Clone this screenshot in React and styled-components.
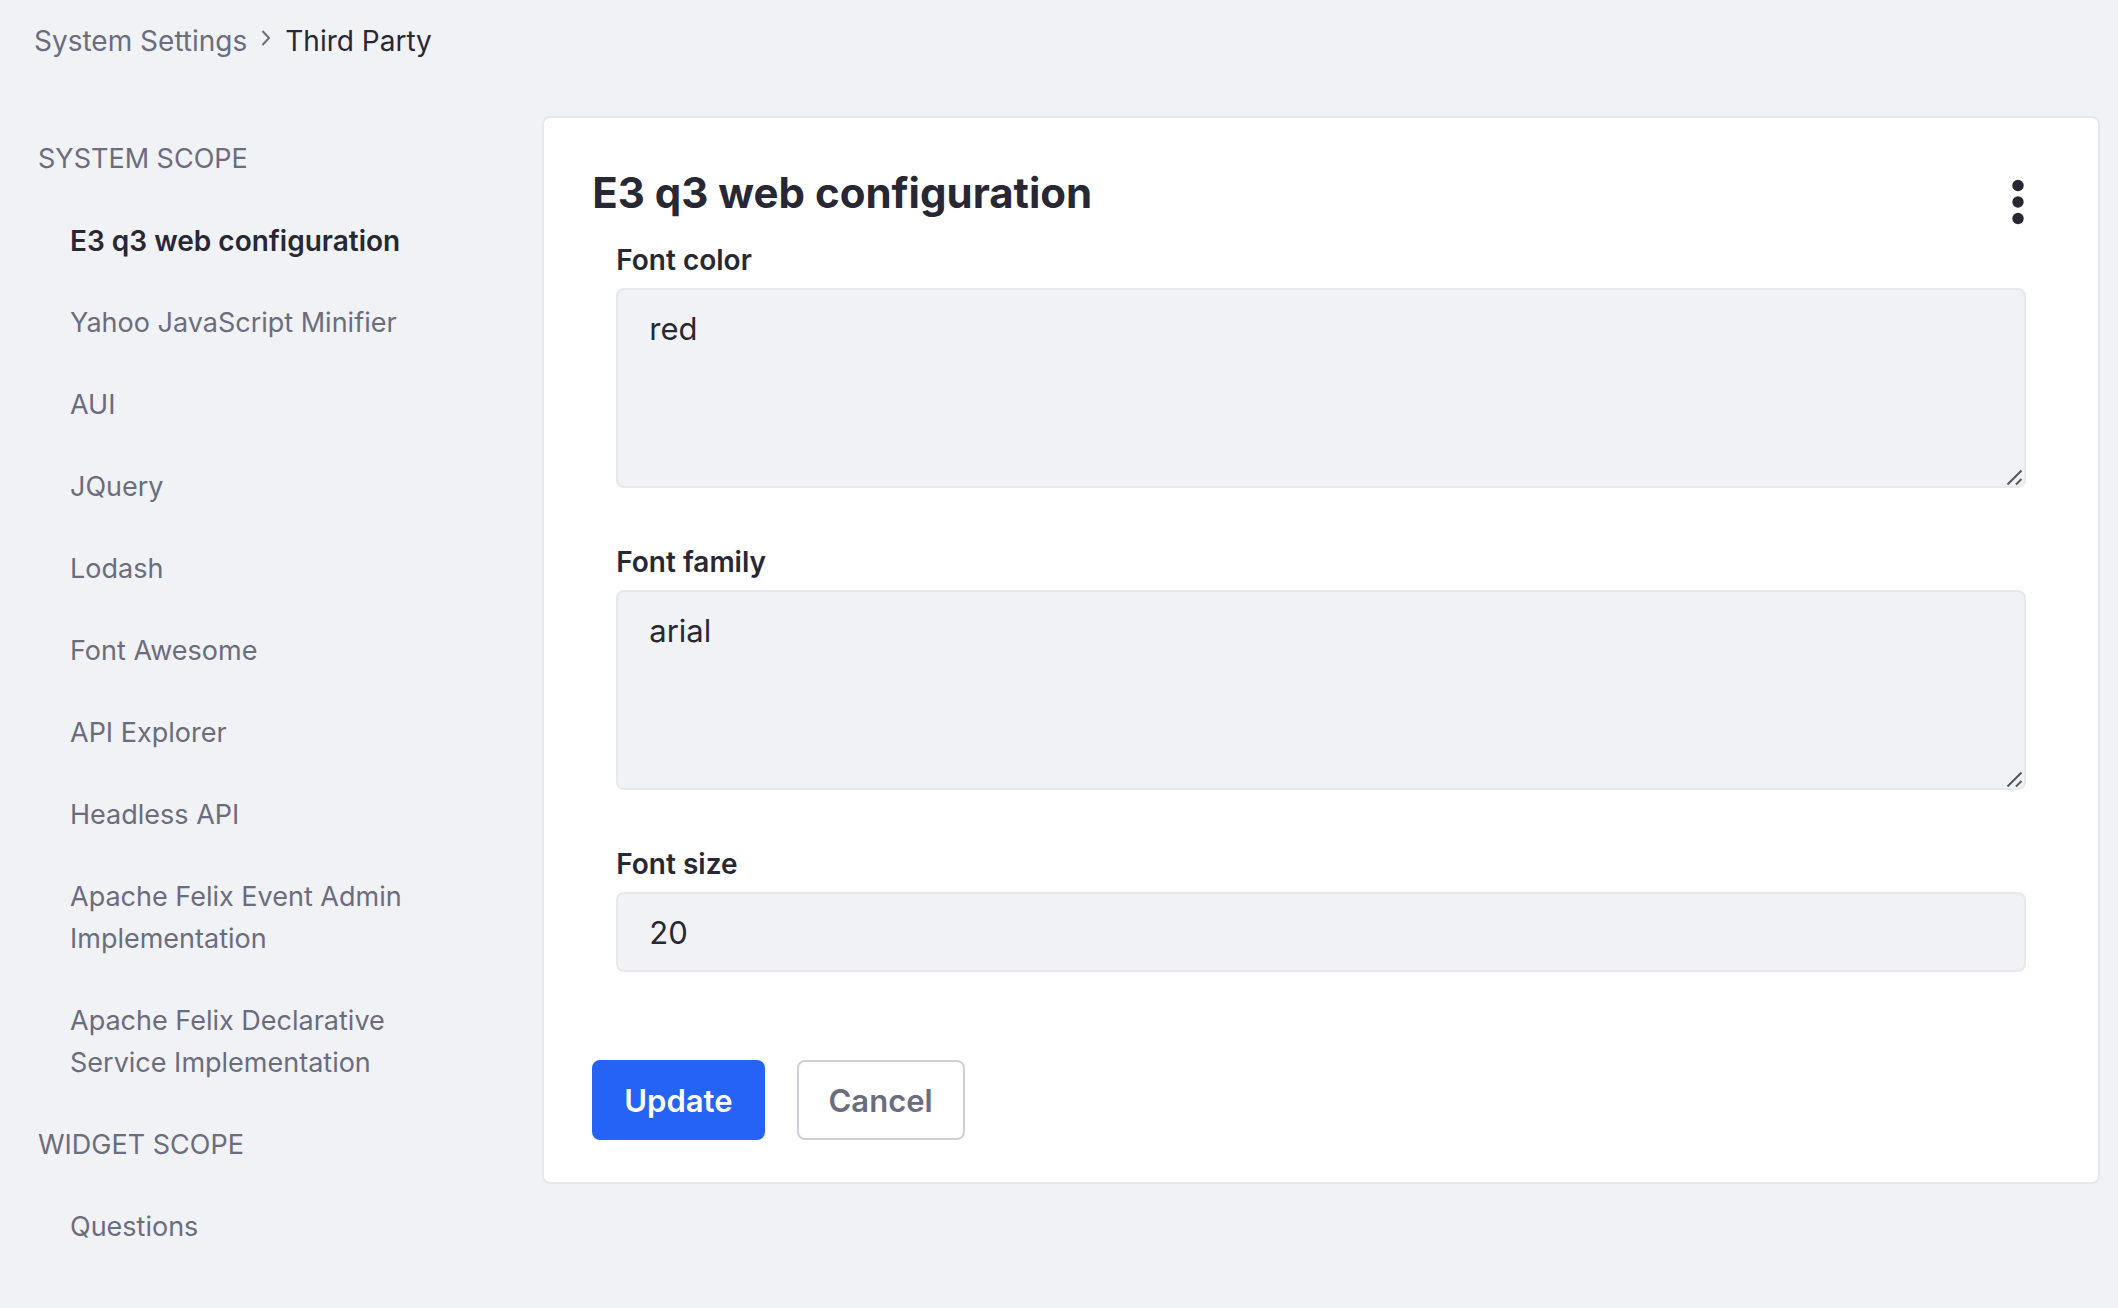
import React from "react";
import styled, { createGlobalStyle, css } from "styled-components";

const color = {
  page: "#f1f2f5",
  surface: "#ffffff",
  border: "#e7e7ed",
  text: "#272833",
  muted: "#6b6c7e",
  primary: "#2563f7",
  buttonBorder: "#cdced9",
};

const GlobalStyle = createGlobalStyle`
  *, *::before, *::after { box-sizing: border-box; }
  body {
    margin: 0;
    background: ${color.page};
    color: ${color.text};
    font-family: Inter, "Liberation Sans", sans-serif;
    font-size: 27px;
    line-height: 42px;
  }
`;

const Breadcrumb = styled.nav`
  padding: 20px 34px 54px;
  font-size: 28px;
`;

const Crumbs = styled.ol`
  display: flex;
  flex-wrap: wrap;
  align-items: center;
  margin: 0;
  padding: 0;
  list-style: none;
`;

const Crumb = styled.li`
  display: flex;
  align-items: center;
`;

const CrumbLink = styled.a`
  color: ${color.muted};
  text-decoration: none;
`;

const Chevron = styled.svg`
  width: 10px;
  height: 16px;
  margin: 0 14px 6px;
  fill: none;
  stroke: ${color.muted};
  stroke-width: 2;
`;

const Layout = styled.div`
  display: grid;
  grid-template-columns: minmax(0, 1fr) minmax(0, 3fr);
  align-items: start;
  gap: 5px;
  padding: 0 18px 40px;
`;

const Sidebar = styled.nav`
  padding: 2px 40px 0 20px;
`;

const ScopeTitle = styled.h2`
  margin: 0;
  padding: 20px 0;
  color: ${color.muted};
  font-size: inherit;
  font-weight: 400;
  text-transform: uppercase;
`;

const ScopeList = styled.ul`
  margin: 0;
  padding: 0 32px;
  list-style: none;
`;

const ScopeLink = styled.a`
  display: block;
  padding: 20px 0;
  color: ${(p) => (p.$active ? color.text : color.muted)};
  font-size: ${(p) => (p.$active ? "28px" : "27px")};
  font-weight: ${(p) => (p.$active ? 600 : 400)};
  text-decoration: none;
`;

const Card = styled.form`
  padding: 52px 48px 42px;
  background: ${color.surface};
  border: 2px solid ${color.border};
  border-radius: 8px;
`;

const CardHeader = styled.header`
  display: flex;
  align-items: flex-start;
  justify-content: space-between;
`;

const Title = styled.h1`
  margin: 0;
  font-size: 42px;
  line-height: 46px;
  font-weight: 700;
`;

const MenuButton = styled.button`
  display: flex;
  align-items: center;
  justify-content: center;
  width: 64px;
  height: 64px;
  padding: 0;
  color: ${color.text};
  background: transparent;
  border: 0;
  border-radius: 8px;
  cursor: pointer;
`;

const Fields = styled.div`
  display: flex;
  flex-direction: column;
  gap: 54px;
  padding: 6px 24px 88px;
`;

const Field = styled.div`
  display: flex;
  flex-direction: column;
  gap: 8px;
`;

const Label = styled.label`
  font-size: 28px;
  line-height: 40px;
  font-weight: 600;
`;

const control = css`
  display: block;
  width: 100%;
  margin: 0;
  padding: 15px 31px 13px;
  color: ${color.text};
  background: ${color.page};
  border: 2px solid ${color.border};
  border-radius: 8px;
  outline: 0;
  font-family: inherit;
  font-size: 31px;
  line-height: 48px;
`;

const TextInput = styled.input`
  ${control}
`;

const AreaWrap = styled.div`
  position: relative;
`;

const TextArea = styled.textarea`
  ${control}
  height: 200px;
  resize: vertical;

  &::-webkit-resizer {
    display: none;
  }
`;

const Grip = styled.svg`
  position: absolute;
  right: 2px;
  bottom: 2px;
  width: 18px;
  height: 18px;
  fill: none;
  stroke: #55565c;
  stroke-width: 2;
  pointer-events: none;
`;

const Actions = styled.div`
  display: flex;
  flex-wrap: wrap;
  gap: 32px;
`;

const Button = styled.button`
  padding: 15px 30px 13px;
  color: ${(p) => (p.$primary ? "#ffffff" : color.muted)};
  background: ${(p) => (p.$primary ? color.primary : color.surface)};
  border: 2px solid ${(p) => (p.$primary ? color.primary : color.buttonBorder)};
  border-radius: 8px;
  font-family: inherit;
  font-size: 31px;
  line-height: 48px;
  font-weight: 600;
  cursor: pointer;
`;

const scopes = [
  {
    title: "System Scope",
    items: [
      "E3 q3 web configuration",
      "Yahoo JavaScript Minifier",
      "AUI",
      "JQuery",
      "Lodash",
      "Font Awesome",
      "API Explorer",
      "Headless API",
      "Apache Felix Event Admin Implementation",
      "Apache Felix Declarative Service Implementation",
    ],
  },
  { title: "Widget Scope", items: ["Questions"] },
];

const activeItem = "E3 q3 web configuration";

function AreaField({ id, label, value }) {
  return (
    <Field>
      <Label htmlFor={id}>{label}</Label>
      <AreaWrap>
        <TextArea id={id} name={id} defaultValue={value} />
        <Grip viewBox="0 0 18 18" aria-hidden="true">
          <path d="M1.5 16.5 15.5 2.5M10 16.5l5.5-5.5" />
        </Grip>
      </AreaWrap>
    </Field>
  );
}

export default function App() {
  return (
    <>
      <GlobalStyle />
      <Breadcrumb aria-label="Breadcrumb">
        <Crumbs>
          <Crumb>
            <CrumbLink href="#system-settings">System Settings</CrumbLink>
            <Chevron viewBox="0 0 10 16" aria-hidden="true">
              <path d="M1.5 1 8 8l-6.5 7" />
            </Chevron>
          </Crumb>
          <Crumb aria-current="page">Third Party</Crumb>
        </Crumbs>
      </Breadcrumb>
      <Layout>
        <Sidebar aria-label="Configurations">
          {scopes.map((scope) => (
            <section key={scope.title}>
              <ScopeTitle>{scope.title}</ScopeTitle>
              <ScopeList>
                {scope.items.map((item) => (
                  <li key={item}>
                    <ScopeLink href="#configuration" $active={item === activeItem}>
                      {item}
                    </ScopeLink>
                  </li>
                ))}
              </ScopeList>
            </section>
          ))}
        </Sidebar>
        <Card onSubmit={(e) => e.preventDefault()}>
          <CardHeader>
            <Title>E3 q3 web configuration</Title>
            <MenuButton type="button" aria-label="Options">
              <svg width="12" height="46" viewBox="0 0 12 46" fill="currentColor" aria-hidden="true">
                <circle cx="6" cy="6.5" r="5.7" />
                <circle cx="6" cy="23" r="5.7" />
                <circle cx="6" cy="39.5" r="5.7" />
              </svg>
            </MenuButton>
          </CardHeader>
          <Fields>
            <AreaField id="fontColor" label="Font color" value="red" />
            <AreaField id="fontFamily" label="Font family" value="arial" />
            <Field>
              <Label htmlFor="fontSize">Font size</Label>
              <TextInput id="fontSize" name="fontSize" type="text" defaultValue="20" />
            </Field>
          </Fields>
          <Actions>
            <Button type="submit" $primary>
              Update
            </Button>
            <Button type="button">Cancel</Button>
          </Actions>
        </Card>
      </Layout>
    </>
  );
}
